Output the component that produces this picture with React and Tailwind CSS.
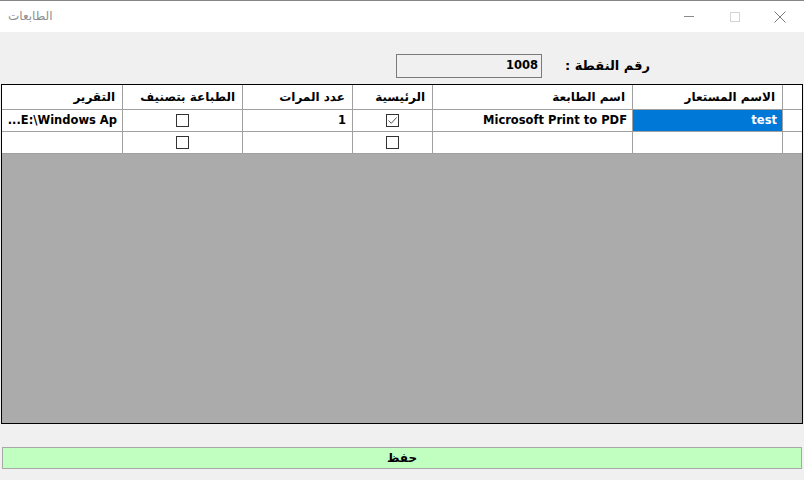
import React from "react";

const font = { fontFamily: '"DejaVu Sans", "Liberation Sans", sans-serif' };

const cols = [
  { key: "rh", w: "w-[20px]" },
  { key: "alias", w: "w-[150px]", title: "الاسم المستعار" },
  { key: "printer", w: "w-[200px]", title: "اسم الطابعة" },
  { key: "main", w: "w-[80px]", title: "الرئيسية" },
  { key: "count", w: "w-[110px]", title: "عدد المرات" },
  { key: "sort", w: "w-[120px]", title: "الطباعة بتصنيف" },
  { key: "report", w: "w-[120px]", title: "التقرير" },
];

function CheckBox({ checked }) {
  return (
    <div className="w-[13px] h-[13px] border border-[#333333] bg-white flex items-center justify-center">
      {checked && (
        <svg width="11" height="11" viewBox="0 0 11 11">
          <path d="M1.5 5.5 L4.3 8.3 L9.5 2.5" fill="none" stroke="#555" strokeWidth="1" />
        </svg>
      )}
    </div>
  );
}

function Cell({ col, last, className = "", children }) {
  return (
    <div
      className={`${col.w} shrink-0 h-full flex items-center ${last ? "" : "border-l border-[#a0a0a0]"} ${className}`}
    >
      {children}
    </div>
  );
}

export default function App() {
  const rows = [
    {
      alias: "test",
      printer: "Microsoft Print to PDF",
      main: true,
      count: "1",
      sort: false,
      report: "...E:\\Windows Ap",
    },
    { alias: "", printer: "", main: false, count: "", sort: false, report: "" },
  ];

  return (
    <div className="w-[804px] h-[480px] bg-[#f0f0f0] flex flex-col overflow-hidden" style={font}>
      {/* title bar */}
      <div className="h-[32px] bg-white border-t border-[#858585] flex items-center justify-between shrink-0">
        <div className="pl-[8px] text-[12px] text-[#8f8f8f] pb-[1px]" dir="rtl">الطابعات</div>
        <div className="flex items-center h-full">
          <div className="w-[46px] flex justify-center">
            <div className="w-[10px] h-px bg-[#8a8a8a]" />
          </div>
          <div className="w-[46px] flex justify-center">
            <div className="w-[10px] h-[10px] border border-[#d4d4d4]" />
          </div>
          <div className="w-[46px] flex justify-center pr-[2px]">
            <svg width="12" height="12" viewBox="0 0 12 12">
              <path d="M0.5 0.5 L11.5 11.5 M11.5 0.5 L0.5 11.5" stroke="#7a7a7a" strokeWidth="1" />
            </svg>
          </div>
        </div>
      </div>

      {/* point number */}
      <div className="flex justify-end items-center gap-[22px] pr-[154px] mt-[22px] shrink-0">
        <div className="w-[146px] h-[24px] border border-[#7a7a7a] bg-[#f0f0f0] flex items-center justify-end pr-[3px] text-[11.5px] font-bold text-black">
          1008
        </div>
        <div className="w-[86px] text-right text-[13px] font-bold text-black" dir="rtl">
          رقم النقطة :
        </div>
      </div>

      {/* grid */}
      <div className="mt-[6px] ml-[1px] w-[802px] h-[340px] border border-black bg-[#ababab] shrink-0 text-[12px] font-bold text-black">
        <div className="flex h-[25px] bg-white border-b border-[#a0a0a0]" dir="rtl">
          {cols.map((c, i) => (
            <Cell key={c.key} col={c} last={i === cols.length - 1} className="pr-[7px] text-right">
              {c.title}
            </Cell>
          ))}
        </div>
        {rows.map((r, ri) => (
          <div key={ri} className="flex h-[22px] bg-white border-b border-[#a0a0a0] text-[11.5px]" dir="rtl">
            <Cell col={cols[0]} />
            <Cell col={cols[1]} className={ri === 0 ? "bg-[#0078d7] text-white pr-[5px] pt-[1px]" : "pr-[5px]"}>
              {r.alias}
            </Cell>
            <Cell col={cols[2]} className="pr-[5px] pt-[1px]">
              <span dir="ltr">{r.printer}</span>
            </Cell>
            <Cell col={cols[3]} className="justify-center">
              <CheckBox checked={r.main} />
            </Cell>
            <Cell col={cols[4]} className="pr-[6px] pt-[1px]">
              {r.count}
            </Cell>
            <Cell col={cols[5]} className="justify-center">
              <CheckBox checked={r.sort} />
            </Cell>
            <Cell col={cols[6]} last className="pr-[5px] pt-[1px] overflow-hidden whitespace-nowrap">
              <span dir="ltr">{r.report}</span>
            </Cell>
          </div>
        ))}
      </div>

      {/* save button */}
      <div className="mt-[23px] ml-[2px] w-[800px] h-[22px] bg-[#c0ffc0] border border-[#a8a8a8] flex items-center justify-center text-[12px] font-bold text-black shrink-0" dir="rtl">
        حفظ
      </div>
    </div>
  );
}
